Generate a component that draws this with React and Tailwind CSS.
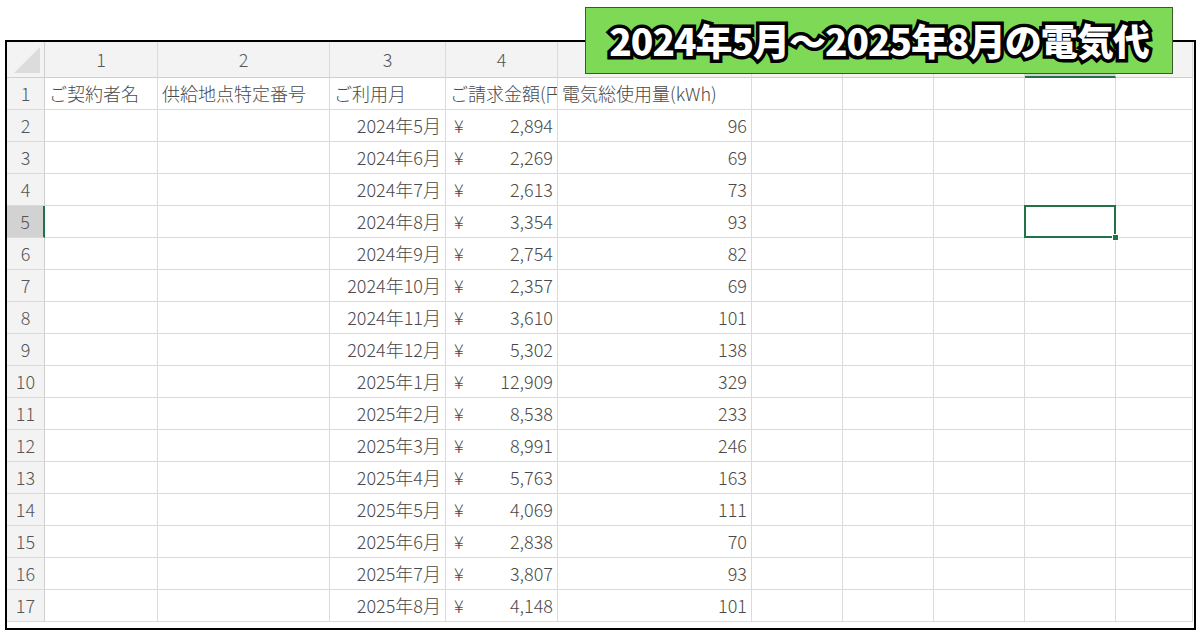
const cols = [113, 172, 116, 112, 194, 91, 91, 91, 91, 77];
const heads = ["1", "2", "3", "4", "5", "6", "7", "8", "9", "10"];
const data = [
  ["2024年5月", "2,894", "96"],
  ["2024年6月", "2,269", "69"],
  ["2024年7月", "2,613", "73"],
  ["2024年8月", "3,354", "93"],
  ["2024年9月", "2,754", "82"],
  ["2024年10月", "2,357", "69"],
  ["2024年11月", "3,610", "101"],
  ["2024年12月", "5,302", "138"],
  ["2025年1月", "12,909", "329"],
  ["2025年2月", "8,538", "233"],
  ["2025年3月", "8,991", "246"],
  ["2025年4月", "5,763", "163"],
  ["2025年5月", "4,069", "111"],
  ["2025年6月", "2,838", "70"],
  ["2025年7月", "3,807", "93"],
  ["2025年8月", "4,148", "101"],
];

const font = { fontFamily: '"Noto Sans CJK JP", "Liberation Sans", sans-serif' };

function Cell({ w, children, className = "" }) {
  return (
    <div
      className={"h-full shrink-0 border-r border-b border-[#dadada] px-1 flex items-center overflow-hidden whitespace-nowrap " + className}
      style={{ width: w }}
    >
      {children}
    </div>
  );
}

export default function App() {
  const rows = [
    ["ご契約者名", "供給地点特定番号", "ご利用月", "ご請求金額(円)", "電気総使用量(kWh)"],
    ...data.map((d) => ["", "", d[0], d[1], d[2]]),
  ];
  return (
    <div className="w-[1200px] h-[630px] bg-white relative overflow-hidden text-[18px] font-light text-[#4a4a4a]" style={font}>
      <div className="absolute left-[5px] top-[40px] w-[1191px] h-[590px] border-2 border-black bg-white overflow-hidden">
        <div className="flex h-[36px] bg-[#f3f3f3] text-[#555]">
          <div className="w-[38px] shrink-0 border-r border-b border-[#cfcfcf] relative">
            <div className="absolute right-[4px] bottom-[4px] w-0 h-0 border-l-[26px] border-l-transparent border-b-[26px] border-b-[#dcdcdc]" />
          </div>
          {cols.map((w, i) => (
            <div
              key={i}
              className={"shrink-0 border-r border-[#dadada] flex items-center justify-center " + (i === 8 ? "border-b-2 border-b-[#217346] bg-[#d2d2d2]" : "border-b border-b-[#cfcfcf]")}
              style={{ width: w }}
            >
              {heads[i]}
            </div>
          ))}
        </div>
        {rows.map((r, ri) => (
          <div key={ri} className="flex h-[32px]">
            <div
              className={"w-[38px] shrink-0 border-b border-[#dadada] flex items-center justify-center text-[#555] " + (ri === 4 ? "bg-[#d2d2d2] border-r-2 border-r-[#217346]" : "bg-[#f3f3f3] border-r border-r-[#cfcfcf]")}
            >
              {ri + 1}
            </div>
            <Cell w={cols[0]}>{r[0]}</Cell>
            <Cell w={cols[1]}>{r[1]}</Cell>
            <Cell w={cols[2]} className={ri ? "justify-end" : ""}>{r[2]}</Cell>
            <Cell w={cols[3]} className={ri ? "justify-between" : ""}>
              {ri ? (
                <>
                  <span className="pl-[4px]">¥</span>
                  <span>{r[3]}</span>
                </>
              ) : (
                r[3]
              )}
            </Cell>
            <Cell w={cols[4]} className={ri ? "justify-end" : ""}>{r[4]}</Cell>
            {cols.slice(5).map((w, i) => (
              <Cell key={i} w={w} className={i + 5 === 8 && ri === 4 ? "relative !overflow-visible" : ""}>
                {i + 5 === 8 && ri === 4 && (
                  <div className="absolute left-[-1px] top-[-1px] right-[-1px] bottom-[-1px] border-2 border-[#217346]">
                    <div className="absolute right-[-5px] bottom-[-5px] w-[7px] h-[7px] bg-[#217346] border border-white" />
                  </div>
                )}
              </Cell>
            ))}
          </div>
        ))}
      </div>
      <div className="absolute left-[585px] top-[7px] w-[588px] h-[67px] bg-[#7ed957] border border-[#3a5a2a] flex items-center justify-center">
        <span
          className="text-white font-black text-[37px] tracking-[-1px] [-webkit-text-stroke:7px_black] [paint-order:stroke_fill]"
          style={font}
        >
          2024年5月～2025年8月の電気代
        </span>
      </div>
    </div>
  );
}
